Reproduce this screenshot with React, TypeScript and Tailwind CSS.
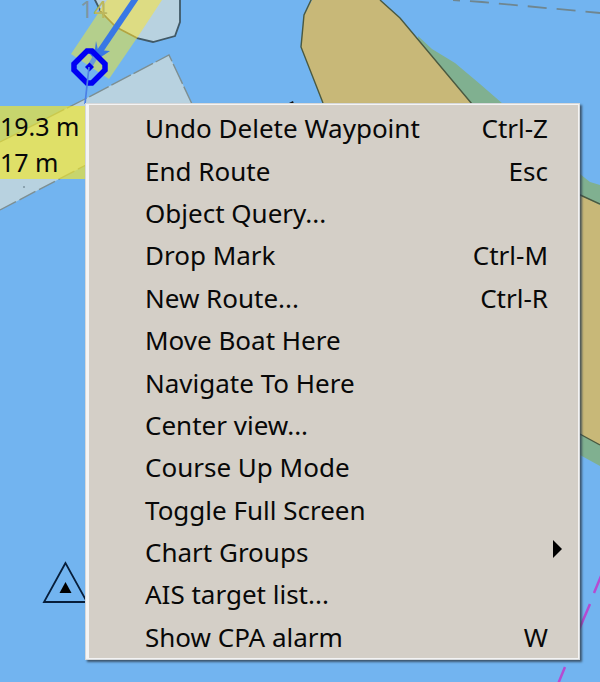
type MenuItem = { label: string; shortcut?: string; submenu?: boolean };

const items: MenuItem[] = [
  { label: "Undo Delete Waypoint", shortcut: "Ctrl-Z" },
  { label: "End Route", shortcut: "Esc" },
  { label: "Object Query..." },
  { label: "Drop Mark", shortcut: "Ctrl-M" },
  { label: "New Route...", shortcut: "Ctrl-R" },
  { label: "Move Boat Here" },
  { label: "Navigate To Here" },
  { label: "Center view..." },
  { label: "Course Up Mode" },
  { label: "Toggle Full Screen" },
  { label: "Chart Groups", submenu: true },
  { label: "AIS target list..." },
  { label: "Show CPA alarm", shortcut: "W" },
];

function Chart() {
  return (
    <svg
      className="absolute inset-0 size-full"
      viewBox="0 0 600 682"
      preserveAspectRatio="xMidYMid slice"
      aria-hidden="true"
    >
      <rect width="600" height="682" fill="#72b4f0" />

      {/* shoal areas */}
      <path d="M418 36 L432 49 L455 63 L480 84 L503 104 V160 H560 L580 174 L590 182 L600 185 V466 L580 455 L440 300 Z" fill="#80b090" />
      <path d="M312 0 L304 16 L301 47 L323 103 L345 155 L560 425 L580 434 L600 445 V205 L580 195 L471 103 L400 18 L380 0 Z" fill="#c8b878" />
      <path d="M312 -2 L304 15 L301 47 L323 103 M380 0 L400 18 L472 104 M578 194 L600 204 M578 433 L600 445" fill="none" stroke="#4a5940" strokeWidth="1.4" />
      <path d="M289 103 L293 101 L294 104 Z" fill="#111" />

      {/* restricted area */}
      <path d="M0 142 L85 99 L169 55 L192 104 V150 L86 165 L0 210 Z" fill="#b8d2e0" />
      <path d="M0 142 L85 99 L169 55 L192 104" fill="none" stroke="#7d8f92" strokeWidth="1.4" strokeDasharray="22 3" />
      <path d="M0 210 L86 165" fill="none" stroke="#7d8f92" strokeWidth="1.4" strokeDasharray="18 4" />
      <path d="M86 103.5 H192" stroke="#8fa4ae" strokeWidth="1" />
      <circle cx="24" cy="187" r="0.8" fill="#536873" />

      {/* depth contour */}
      <path d="M95 0 L101 12 L116 27 L136 38 L153 42 L175 36 L180 22 V0 Z" fill="#b8d2e0" />
      <path d="M94 -2 L101 12 L116 27 L136 38 L153 42 L175 36 L180 22 V-2" fill="none" stroke="#415966" strokeWidth="1.8" />

      {/* route corridor */}
      <path d="M107 0 L71 54 L109 79 L137 38 L116 27 L101 12 Z" fill="#b4cf8c" />
      <path d="M107 0 L100 10 L116 27 L137 38 L162 0 Z" fill="#dddc83" />
      <path d="M100 11 L116 27 L137 38" fill="none" stroke="#b3a440" strokeWidth="1.6" />

      {/* sounding */}
      <text x="80" y="18" fontSize="24" fontFamily="Noto Sans, sans-serif">
        <tspan fill="#8094a0">1</tspan>
        <tspan fill="#bdb75c">4</tspan>
      </text>

      {/* leg and heading */}
      <path d="M136 -2 L98 54" stroke="#3978e5" strokeWidth="6" />
      <path d="M96 41 L98 50 L110 51 L101 57 L94 59 L89 53 L95 49 Z" fill="#3978e5" />
      <path d="M97 54 L90 66" stroke="#6a9bd5" strokeWidth="5" />

      {/* active waypoint */}
      <path d="M87 51 H92 L105 64 V70 L92 83 H87 L74 70 V64 Z" fill="none" stroke="#0000f4" strokeWidth="5.5" />
      <path d="M89.5 62.5 L94 67 L89.5 71.5 L85 67 Z" fill="#0000e8" />
      <path d="M89 67 L85 104" stroke="#4b80e5" strokeWidth="1.7" />

      {/* distant boundaries */}
      <path d="M453 0 L482 2 L600 13" fill="none" stroke="#6f8690" strokeWidth="1.8" strokeDasharray="19 10" strokeDashoffset="12" />
      <path d="M604 569 L594 593 M590 604 L578 632 M565 667 L558 684" stroke="#b54bd1" strokeWidth="2.5" />

      {/* beacon */}
      <path d="M65.5 563 L44 602 H87 Z" fill="none" stroke="#071e3b" strokeWidth="1.8" />
      <path d="M65.5 582 L59.5 593 H71.5 Z" fill="#000" />
    </svg>
  );
}

export default function App() {
  return (
    <main className="relative flex min-h-screen overflow-hidden bg-[#72b4f0] pt-[103px] pr-5 pb-[22px] font-['Noto_Sans',sans-serif] text-[#080808]">
      <Chart />
      <aside className="relative mt-[3px] h-[73px] w-[85px] shrink-0 self-start overflow-hidden bg-[#f3e629a8] text-[25px] leading-9 whitespace-nowrap">
        <p className="pt-0.5">19.3 m</p>
        <p>17 m</p>
      </aside>
      <div
        role="menu"
        aria-label="Chart menu"
        className="relative flex min-w-0 flex-1 flex-col border-2 border-l-4 border-[#f4f4f4] bg-[#d4cfc7] pt-0.5 shadow-[2px_2px_2px_#304050cc] outline-1 -outline-offset-1 outline-[#a9afb166]"
      >
        {items.map((item) => (
          <button
            key={item.label}
            type="button"
            role="menuitem"
            className="flex flex-1 items-center justify-between pr-[30px] pl-14 text-left text-[26px] leading-9 whitespace-nowrap"
          >
            <span>{item.label}</span>
            {item.shortcut && <kbd className="font-[inherit]">{item.shortcut}</kbd>}
            {item.submenu && (
              <svg className="-mr-3.5 mb-1.5 h-[18px] w-[9px]" viewBox="0 0 9 18" aria-hidden="true">
                <path d="M0 0 L9 9 L0 18 Z" fill="#000" />
              </svg>
            )}
          </button>
        ))}
      </div>
    </main>
  );
}
